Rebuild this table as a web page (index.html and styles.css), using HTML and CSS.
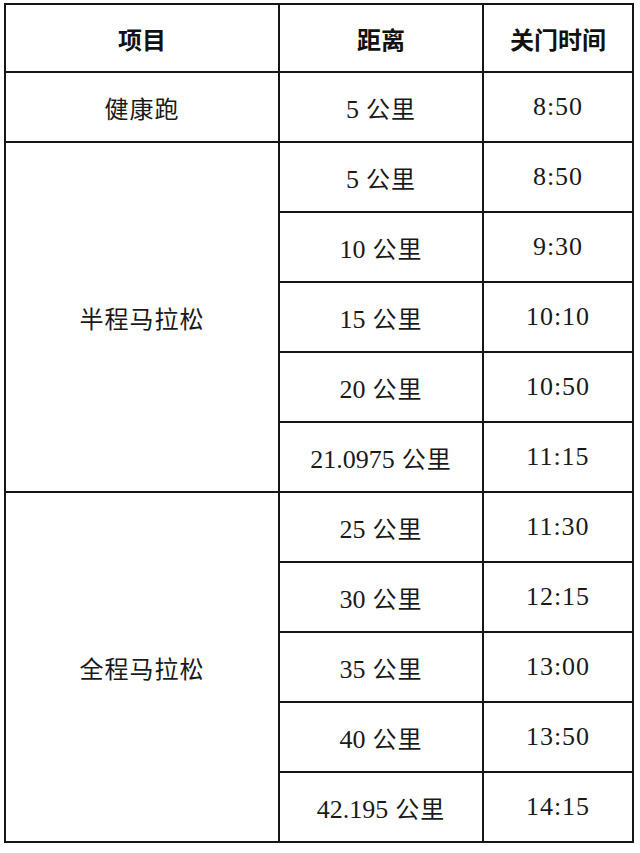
FILE: index.html
```html
<!DOCTYPE html>
<html lang="zh-CN">
<head>
<meta charset="utf-8">
<title>关门时间</title>
<link rel="stylesheet" href="styles.css">
</head>
<body>
<table class="cutoff">
  <colgroup>
    <col class="c1">
    <col class="c2">
    <col class="c3">
  </colgroup>
  <thead>
    <tr class="head">
      <th>项目</th>
      <th>距离</th>
      <th>关门时间</th>
    </tr>
  </thead>
  <tbody>
    <tr><td>健康跑</td><td><span class="n">5</span> 公里</td><td class="t">8:50</td></tr>
    <tr><td rowspan="5">半程马拉松</td><td><span class="n">5</span> 公里</td><td class="t">8:50</td></tr>
    <tr><td><span class="n">10</span> 公里</td><td class="t">9:30</td></tr>
    <tr><td><span class="n">15</span> 公里</td><td class="t">10:10</td></tr>
    <tr><td><span class="n">20</span> 公里</td><td class="t">10:50</td></tr>
    <tr><td><span class="n">21.0975</span> 公里</td><td class="t">11:15</td></tr>
    <tr><td rowspan="5">全程马拉松</td><td><span class="n">25</span> 公里</td><td class="t">11:30</td></tr>
    <tr><td><span class="n">30</span> 公里</td><td class="t">12:15</td></tr>
    <tr><td><span class="n">35</span> 公里</td><td class="t">13:00</td></tr>
    <tr><td><span class="n">40</span> 公里</td><td class="t">13:50</td></tr>
    <tr><td><span class="n">42.195</span> 公里</td><td class="t">14:15</td></tr>
  </tbody>
</table>
</body>
</html>
```
FILE: styles.css
```css
html, body {
  margin: 0;
  padding: 0;
  background: #ffffff;
}

body {
  padding: 3px 0 0 4px;
}

.cutoff {
  border-collapse: collapse;
  table-layout: fixed;
  width: 628px;
  border: 2px solid #161616;
  font-family: "Liberation Serif", "Noto Sans CJK SC", serif;
  font-size: 24px;
  color: #1a1a1a;
}

.c1 { width: 274px; }
.c2 { width: 204px; }
.c3 { width: 150px; }

.cutoff th,
.cutoff td {
  border: 2px solid #161616;
  text-align: center;
  vertical-align: middle;
  padding: 0;
  letter-spacing: 1px;
}

.cutoff th {
  font-family: "Noto Sans CJK SC", sans-serif;
  font-weight: 700;
  font-size: 24px;
  letter-spacing: 0;
  color: #111;
}

.n {
  font-size: 26px;
  letter-spacing: 0;
}

.cutoff td.t {
  font-size: 26px;
  letter-spacing: 1px;
}

.head {
  height: 68px;
}

.cutoff tbody tr {
  height: 70px;
}
```
